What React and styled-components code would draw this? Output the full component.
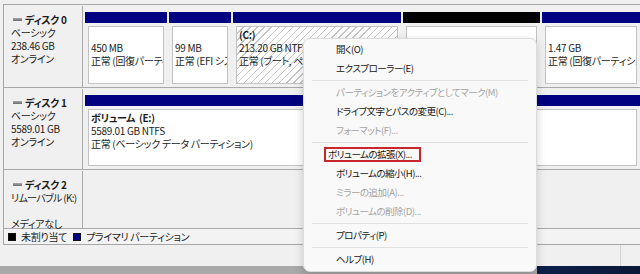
import React from "react";
import styled, { createGlobalStyle } from "styled-components";

const GlobalStyle = createGlobalStyle`
  html, body {
    margin: 0;
    padding: 0;
  }
  body {
    width: 640px;
    height: 274px;
    overflow: hidden;
    background: #f0f0f0;
    font-family: "Noto Sans CJK JP", "Noto Sans", sans-serif;
    font-size: 10px;
    letter-spacing: -0.3px;
    font-feature-settings: "palt";
    color: #1c1c1c;
  }
`;

const Screen = styled.div`
  position: relative;
  width: 640px;
  height: 274px;
  display: flex;
  flex-direction: column;
  background: #f0f0f0;
  overflow: hidden;
`;

const DiskPanel = styled.div`
  margin: 4px 0 0 3px;
  padding-top: 1px;
  border-top: 1px solid #a6a6a6;
  border-left: 1px solid #a6a6a6;
  border-bottom: 1px solid #a6a6a6;
  display: flex;
  flex-direction: column;
`;

const DiskList = styled.div`
  display: flex;
  flex-direction: column;
  gap: 1px;
`;

const DiskRow = styled.div`
  display: flex;
  height: ${(p) => p.$height}px;
  border-bottom: 1px solid #a9a9a9;
`;

const DiskLabel = styled.div`
  box-sizing: border-box;
  width: 79px;
  flex-shrink: 0;
  padding: 7px 0 0 7px;
  border-right: 1px solid #a9a9a9;
  line-height: 13px;
  white-space: nowrap;
`;

const DiskName = styled.div`
  font-weight: bold;
  display: flex;
  align-items: center;
`;

const DiskIcon = styled.span`
  display: inline-block;
  width: 9px;
  height: 3px;
  margin: 0 3px 0 2px;
  background: linear-gradient(#a8a8a8, #6c6c6c);
`;

const LabelLine = styled.div`
  letter-spacing: ${(p) => (p.$tight ? "-0.7px" : "inherit")};
`;

const PartitionArea = styled.div`
  flex: 1;
  min-width: 0;
  padding: 6px 0 0 2px;
  display: flex;
  gap: 2px;
`;

const Partition = styled.div`
  display: flex;
  flex-direction: column;
  width: ${(p) => (p.$width ? `${p.$width}px` : "auto")};
  flex: ${(p) => (p.$width ? "0 0 auto" : "1")};
  min-width: 0;
`;

const PartitionHeader = styled.div`
  height: 11px;
  flex-shrink: 0;
  background: ${(p) => p.$color};
`;

const PartitionBody = styled.div`
  flex: 1;
  padding: 3px;
  display: flex;
`;

const PartitionBox = styled.div`
  flex: 1;
  min-width: 0;
  border: 1px solid #c2c2c2;
  padding: 1px 2px;
  line-height: 13px;
  white-space: nowrap;
  overflow: hidden;
  background: ${(p) =>
    p.$hatched
      ? "repeating-linear-gradient(135deg, #ffffff 0px, #ffffff 4px, #c6c6c6 4px, #c6c6c6 5px)"
      : "#ffffff"};
`;

const VolName = styled.div`
  font-weight: bold;
  height: 13px;
`;

const Legend = styled.div`
  height: 15px;
  display: flex;
  align-items: center;
  padding-left: 4px;
  background: #f3f3f3;
  white-space: nowrap;
`;

const Swatch = styled.span`
  display: inline-block;
  box-sizing: border-box;
  width: 8px;
  height: 8px;
  margin-right: 5px;
  background: ${(p) => p.$color};
  border: 1px solid #101010;
`;

const LegendItem = styled.span`
  display: inline-flex;
  align-items: center;
  margin-right: 6px;
`;

const StatusBar = styled.div`
  height: 21px;
  display: flex;
  background: #f0f0f0;
`;

const StatusCell = styled.div`
  flex: ${(p) => (p.$grow ? 1 : "0 0 19px")};
  border-right: ${(p) => (p.$grow ? "1px solid #d4d4d4" : "none")};
`;

const BottomStrip = styled.div`
  flex: 1;
  display: flex;
`;

const StripGray = styled.div`
  width: 537px;
  background: #a9a9a9;
`;

const StripDesk = styled.div`
  flex: 1;
  background: linear-gradient(90deg, #0c1f4a, #0a1838);
`;

const Menu = styled.div`
  position: absolute;
  left: 303px;
  top: 38px;
  box-sizing: border-box;
  width: 234px;
  height: 234px;
  padding: 1px 0 3px;
  background: #f9f9f9;
  border: 1px solid #dcdcdc;
  border-radius: 7px;
  box-shadow: 0 3px 10px rgba(0, 0, 0, 0.18);
  font-size: 9.5px;
  letter-spacing: -0.5px;
`;

const MenuItem = styled.div`
  height: 19px;
  line-height: 19px;
  padding-left: 32px;
  white-space: nowrap;
  color: ${(p) => (p.$disabled ? "#a3a3a3" : "#141414")};
`;

const MenuSeparator = styled.div`
  height: 1px;
  margin: 2px 8px;
  background: #e1e1e1;
`;

const Highlight = styled.span`
  display: inline-block;
  margin-left: -12px;
  padding: 0 7px 0 2px;
  line-height: 11px;
  border: 2px solid #c9252d;
`;

const disk0 = [
  { width: 82, color: "#000080", lines: ["", "450 MB", "正常 (回復パーティション)"] },
  { width: 62, color: "#000080", lines: ["", "99 MB", "正常 (EFI システム パーティション)"] },
  { width: 168, color: "#000080", hatched: true, lines: ["(C:)", "213.20 GB NTFS", "正常 (ブート, ページ ファイル, クラッシュ ダンプ)"] },
  { width: 137, color: "#000000", lines: ["", "", ""] },
  { color: "#000080", lines: ["", "1.47 GB", "正常 (回復パーティション)"] },
];

const menu = [
  { label: "開く(O)" },
  { label: "エクスプローラー(E)" },
  { sep: true },
  { label: "パーティションをアクティブとしてマーク(M)", disabled: true },
  { label: "ドライブ文字とパスの変更(C)..." },
  { label: "フォーマット(F)...", disabled: true },
  { sep: true },
  { label: "ボリュームの拡張(X)...", boxed: true },
  { label: "ボリュームの縮小(H)..." },
  { label: "ミラーの追加(A)...", disabled: true },
  { label: "ボリュームの削除(D)...", disabled: true },
  { sep: true },
  { label: "プロパティ(P)" },
  { sep: true },
  { label: "ヘルプ(H)" },
];

function Label({ name, lines, tight }) {
  return (
    <DiskLabel>
      <DiskName>
        <DiskIcon />
        {name}
      </DiskName>
      {lines.map((l, i) => (
        <LabelLine key={i} $tight={tight && i === 0}>
          {l || "\u00a0"}
        </LabelLine>
      ))}
    </DiskLabel>
  );
}

export default function App() {
  return (
    <Screen>
      <GlobalStyle />
      <DiskPanel>
        <DiskList>
          <DiskRow $height={81}>
            <Label name="ディスク 0" lines={["ベーシック", "238.46 GB", "オンライン"]} />
            <PartitionArea>
              {disk0.map((p, i) => (
                <Partition key={i} $width={p.width}>
                  <PartitionHeader $color={p.color} />
                  <PartitionBody>
                    <PartitionBox $hatched={p.hatched}>
                      <VolName>{p.lines[0]}</VolName>
                      <div>{p.lines[1]}</div>
                      <div>{p.lines[2]}</div>
                    </PartitionBox>
                  </PartitionBody>
                </Partition>
              ))}
            </PartitionArea>
          </DiskRow>
          <DiskRow $height={80}>
            <Label name="ディスク 1" lines={["ベーシック", "5589.01 GB", "オンライン"]} />
            <PartitionArea>
              <Partition>
                <PartitionHeader $color="#000080" />
                <PartitionBody>
                  <PartitionBox>
                    <VolName>ボリューム&nbsp;&nbsp;(E:)</VolName>
                    <div>5589.01 GB NTFS</div>
                    <div>正常 (ベーシック データ パーティション)</div>
                  </PartitionBox>
                </PartitionBody>
              </Partition>
            </PartitionArea>
          </DiskRow>
          <DiskRow $height={57}>
            <Label tight name="ディスク 2" lines={["リムーバブル (K:)", "", "メディアなし"]} />
          </DiskRow>
        </DiskList>
        <Legend>
          <LegendItem>
            <Swatch $color="#000000" />
            未割り当て
          </LegendItem>
          <LegendItem>
            <Swatch $color="#000080" />
            プライマリ パーティション
          </LegendItem>
        </Legend>
      </DiskPanel>
      <StatusBar>
        <StatusCell $grow />
        <StatusCell />
      </StatusBar>
      <BottomStrip>
        <StripGray />
        <StripDesk />
      </BottomStrip>

      <Menu>
        {menu.map((m, i) =>
          m.sep ? (
            <MenuSeparator key={i} />
          ) : (
            <MenuItem key={i} $disabled={m.disabled}>
              {m.boxed ? <Highlight>{m.label}</Highlight> : m.label}
            </MenuItem>
          )
        )}
      </Menu>
    </Screen>
  );
}
